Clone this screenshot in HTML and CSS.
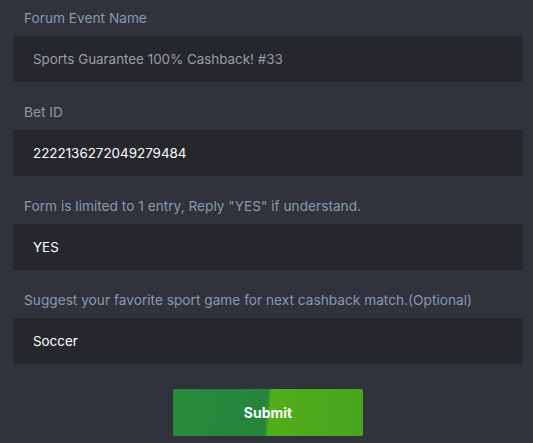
FILE: index.html
```html
<!DOCTYPE html>
<html>
<head>
<meta charset="utf-8">
<link rel="stylesheet" href="styles.css">
</head>
<body>
<form class="form">
  <div class="group">
    <label class="label">Forum Event Name</label>
    <div class="field placeholder">Sports Guarantee 100% Cashback! #33</div>
  </div>
  <div class="group">
    <label class="label">Bet ID</label>
    <div class="field">2222136272049279484</div>
  </div>
  <div class="group">
    <label class="label">Form is limited to 1 entry, Reply "YES" if understand.</label>
    <div class="field">YES</div>
  </div>
  <div class="group">
    <label class="label">Suggest your favorite sport game for next cashback match.(Optional)</label>
    <div class="field">Soccer</div>
  </div>
  <div class="actions">
    <button type="button" class="submit">Submit</button>
  </div>
</form>
</body>
</html>
```
FILE: styles.css
```css
html, body {
  margin: 0;
  padding: 0;
  background: #30333b;
  font-family: Inter, "Noto Sans", sans-serif;
  font-size: 14px;
}
.form {
  padding: 0 10px 0 13px;
}
.group {
  margin-bottom: 12px;
}
.label {
  display: block;
  padding: 8px 0 8px 11px;
  line-height: 20px;
  font-size: 13.7px;
  color: #8799b0;
}
.field {
  height: 46px;
  box-sizing: border-box;
  padding: 0 20px;
  display: flex;
  align-items: center;
  background: #25272c;
  color: #ffffff;
  font-size: 13.4px;
}
.field.placeholder {
  color: #9a9ea6;
}
.actions {
  display: flex;
  justify-content: center;
  padding-top: 13px;
}
.submit {
  width: 190px;
  height: 47px;
  border: 0;
  border-radius: 2px;
  background: linear-gradient(95deg, #2a8a3c 0%, #24843c 49%, #52ad1a 51%, #48a41f 100%);
  color: #ffffff;
  font-family: Inter, "Noto Sans", sans-serif;
  font-weight: 700;
  font-size: 14px;
}
```
